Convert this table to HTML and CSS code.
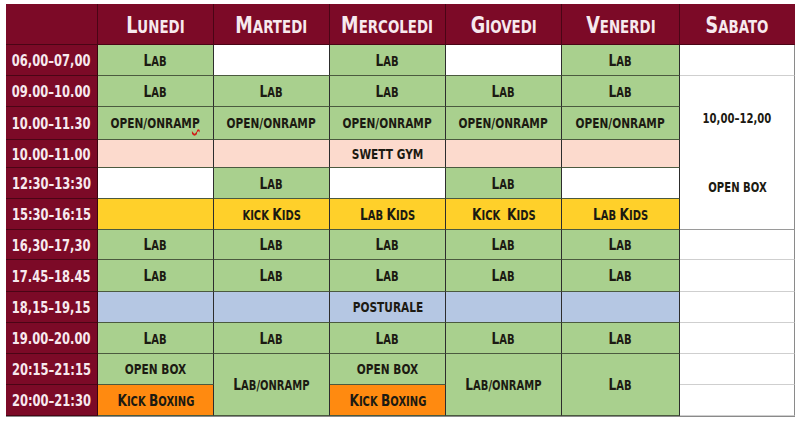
FILE: index.html
```html
<!DOCTYPE html>
<html lang="it">
<head>
<meta charset="utf-8">
<title>Orario</title>
<link rel="stylesheet" href="styles.css">
</head>
<body>
<div class="table">
  <div class="h corner"></div>
  <div class="h day"><span class="x"><span class="B">L</span>UNEDI</span></div>
  <div class="h day"><span class="x"><span class="B">M</span>ARTEDI</span></div>
  <div class="h day"><span class="x"><span class="B">M</span>ERCOLEDI</span></div>
  <div class="h day"><span class="x"><span class="B">G</span>IOVEDI</span></div>
  <div class="h day"><span class="x"><span class="B">V</span>ENERDI</span></div>
  <div class="h day last"><span class="x"><span class="B">S</span>ABATO</span></div>

  <div class="t"><span class="x">06,00–07,00</span></div>
  <div class="c g"><span class="x"><span class="B">L</span>AB</span></div><div class="c w"></div><div class="c g"><span class="x"><span class="B">L</span>AB</span></div><div class="c w"></div><div class="c g"><span class="x"><span class="B">L</span>AB</span></div>
  <div class="s"></div>

  <div class="t"><span class="x">09.00–10.00</span></div>
  <div class="c g"><span class="x"><span class="B">L</span>AB</span></div><div class="c g"><span class="x"><span class="B">L</span>AB</span></div><div class="c g"><span class="x"><span class="B">L</span>AB</span></div><div class="c g"><span class="x"><span class="B">L</span>AB</span></div><div class="c g"><span class="x"><span class="B">L</span>AB</span></div>
  <div class="s sat"><span class="x sat1">10,00–12,00</span><span class="x sat2">OPEN BOX</span></div>

  <div class="t"><span class="x">10.00–11.30</span></div>
  <div class="c g up"><span class="x">OPEN/ONRAM<span class="typo">P</span></span></div>
  <div class="c g up"><span class="x">OPEN/ONRAMP</span></div>
  <div class="c g up"><span class="x">OPEN/ONRAMP</span></div>
  <div class="c g up"><span class="x">OPEN/ONRAMP</span></div>
  <div class="c g up"><span class="x">OPEN/ONRAMP</span></div>

  <div class="t"><span class="x">10.00–11.00</span></div>
  <div class="c p"></div><div class="c p"></div><div class="c p up"><span class="x">SWETT GYM</span></div><div class="c p"></div><div class="c p"></div>

  <div class="t"><span class="x">12:30–13:30</span></div>
  <div class="c w"></div><div class="c g"><span class="x"><span class="B">L</span>AB</span></div><div class="c w"></div><div class="c g"><span class="x"><span class="B">L</span>AB</span></div><div class="c w"></div>

  <div class="t"><span class="x">15:30–16:15</span></div>
  <div class="c y"></div>
  <div class="c y"><span class="x">KICK <span class="B">K</span>IDS</span></div>
  <div class="c y"><span class="x"><span class="B">L</span>AB <span class="B">K</span>IDS</span></div>
  <div class="c y"><span class="x"><span class="B">K</span>ICK&nbsp; <span class="B">K</span>IDS</span></div>
  <div class="c y"><span class="x"><span class="B">L</span>AB <span class="B">K</span>IDS</span></div>

  <div class="t"><span class="x">16,30–17,30</span></div>
  <div class="c g"><span class="x"><span class="B">L</span>AB</span></div><div class="c g"><span class="x"><span class="B">L</span>AB</span></div><div class="c g"><span class="x"><span class="B">L</span>AB</span></div><div class="c g"><span class="x"><span class="B">L</span>AB</span></div><div class="c g"><span class="x"><span class="B">L</span>AB</span></div>
  <div class="s"></div>

  <div class="t"><span class="x">17.45–18.45</span></div>
  <div class="c g"><span class="x"><span class="B">L</span>AB</span></div><div class="c g"><span class="x"><span class="B">L</span>AB</span></div><div class="c g"><span class="x"><span class="B">L</span>AB</span></div><div class="c g"><span class="x"><span class="B">L</span>AB</span></div><div class="c g"><span class="x"><span class="B">L</span>AB</span></div>
  <div class="s"></div>

  <div class="t"><span class="x">18,15–19,15</span></div>
  <div class="c b"></div><div class="c b"></div><div class="c b up"><span class="x">POSTURALE</span></div><div class="c b"></div><div class="c b"></div>
  <div class="s"></div>

  <div class="t"><span class="x">19.00–20.00</span></div>
  <div class="c g"><span class="x"><span class="B">L</span>AB</span></div><div class="c g"><span class="x"><span class="B">L</span>AB</span></div><div class="c g"><span class="x"><span class="B">L</span>AB</span></div><div class="c g"><span class="x"><span class="B">L</span>AB</span></div><div class="c g"><span class="x"><span class="B">L</span>AB</span></div>
  <div class="s"></div>

  <div class="t"><span class="x">20:15–21:15</span></div>
  <div class="c g up"><span class="x">OPEN BOX</span></div>
  <div class="c g span2"><span class="x"><span class="B">L</span>AB/ONRAMP</span></div>
  <div class="c g up"><span class="x">OPEN BOX</span></div>
  <div class="c g span2"><span class="x"><span class="B">L</span>AB/ONRAMP</span></div>
  <div class="c g span2"><span class="x"><span class="B">L</span>AB</span></div>
  <div class="s"></div>

  <div class="t"><span class="x">20:00–21:30</span></div>
  <div class="c o"><span class="x"><span class="B">K</span>ICK <span class="B">B</span>OXING</span></div>
  <div class="c o"><span class="x"><span class="B">K</span>ICK <span class="B">B</span>OXING</span></div>
  <div class="s"></div>
</div>
</body>
</html>
```

FILE: styles.css
```css
html, body {
  margin: 0;
  padding: 0;
  background: #ffffff;
}

.table {
  margin: 4px 0 0 6px;
  width: 789px;
  display: grid;
  grid-template-columns: 92px 116px 116px 116px 116px 118px 115px;
  grid-template-rows: 41px 31px 31px 33px 28px 31px 31px 30px 32px 31px 31px 31px 31px;
  font-family: "DejaVu Sans Condensed", "Liberation Sans", sans-serif;
  font-weight: bold;
  box-sizing: border-box;
  border-bottom: 1px solid #8a8a8a;
}

.table > div {
  box-sizing: border-box;
  display: flex;
  align-items: center;
  justify-content: center;
  white-space: nowrap;
}

.x {
  display: inline-block;
  transform: scaleX(0.82);
}

.h {
  background: #7c0a27;
  color: #f7e9ee;
  font-size: 17.5px;
  border-right: 1px solid #4a0515;
  border-bottom: 1px solid #4a0515;
  padding-top: 2px;
}
.h .B {
  font-size: 23px;
}
.h .x {
  transform: scaleX(0.85);
}
.h.last {
  border-right: 1px solid #7c0a27;
}

.t {
  background: #7c0a27;
  color: #f7e9ee;
  font-size: 16px;
  border-right: 1px solid #3a0410;
  border-bottom: 1px solid #4a0515;
  padding-top: 1px;
}
.t .x {
  transform: scaleX(0.8);
}

.c {
  color: #1c1a12;
  font-size: 13.5px;
  border-right: 1px solid #2d2d2d;
  border-bottom: 1px solid #4b5a3f;
}
.c .B {
  font-size: 16.5px;
}
.c.up {
  font-size: 14px;
}
.c.up .x {
  transform: scaleX(0.84);
}

.g { background: #a9d08e; }
.w { background: #ffffff; }
.p { background: #fcdacd; }
.y { background: #ffd02a; }
.o { background: #ff8a10; }
.b { background: #b5c7e3; }

.span2 {
  grid-row: span 2;
}

.s {
  background: #ffffff;
  border-bottom: 1px solid #cfcfcf;
  border-right: 1px solid #8a8a8a;
}
.table > .s.sat {
  grid-row: span 5;
  flex-direction: column;
  justify-content: flex-start;
  font-size: 14px;
  color: #1c1a12;
  border-bottom: 1px solid #9a9a9a;
}
.sat1 {
  margin-top: 34px;
}
.sat2 {
  margin-top: 53px;
}
.s .x {
  transform: scaleX(0.8);
}

.typo {
  text-decoration: underline wavy #d0201a;
  text-decoration-thickness: 2px;
}
```
